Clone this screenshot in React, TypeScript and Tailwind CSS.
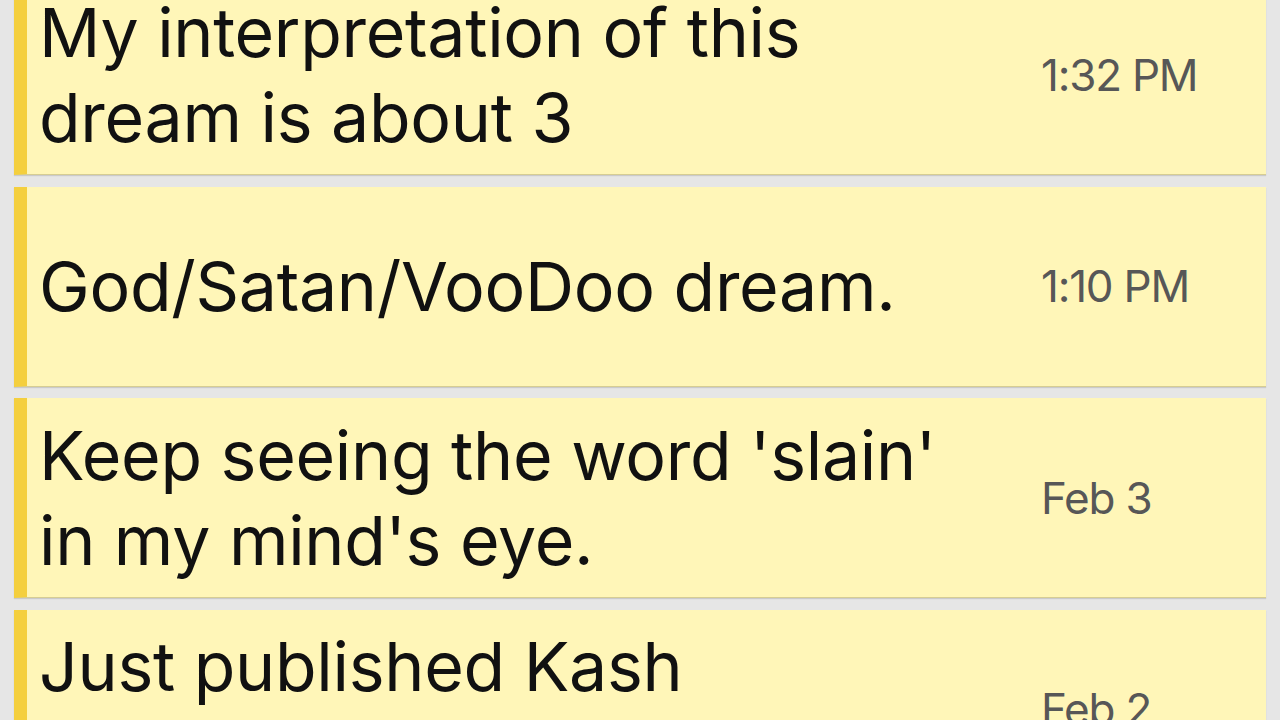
import React from "react";

type Entry = { lines: React.ReactNode; time: string };

const entries: Entry[] = [
  { lines: "My interpretation of this dream is about 3", time: "1:32 PM" },
  { lines: "God/Satan/VooDoo dream.", time: "1:10 PM" },
  { lines: "Keep seeing the word 'slain' in my mind's eye.", time: "Feb 3" },
  {
    lines: (
      <>
        Just published Kash
        <br />
        Dream Journal.
      </>
    ),
    time: "Feb 2",
  },
];

export default function App() {
  return (
    <div className="h-[720px] w-[1280px] overflow-hidden bg-[#e6e6e6] font-['Inter',sans-serif]">
      <div className="-mt-[25px] flex flex-col gap-[11.5px] pl-[14px] pr-[14px]">
        {entries.map((e, i) => (
          <div
            key={i}
            className="flex h-[200px] items-center border-b border-l-[13px] border-b-[#d6cd93] border-l-[#f4cf3e] bg-[#fff6b8] shadow-[0_1px_1px_rgba(0,0,0,0.12)]"
          >
            <div className="w-[1014px] shrink-0 pl-[12px] pr-[92px] text-[68px] leading-[85px] tracking-[-0.3px] text-[#111]">
              {e.lines}
            </div>
            <div className="text-[44px] tracking-[-1.2px] text-[#575757]">{e.time}</div>
          </div>
        ))}
      </div>
    </div>
  );
}
